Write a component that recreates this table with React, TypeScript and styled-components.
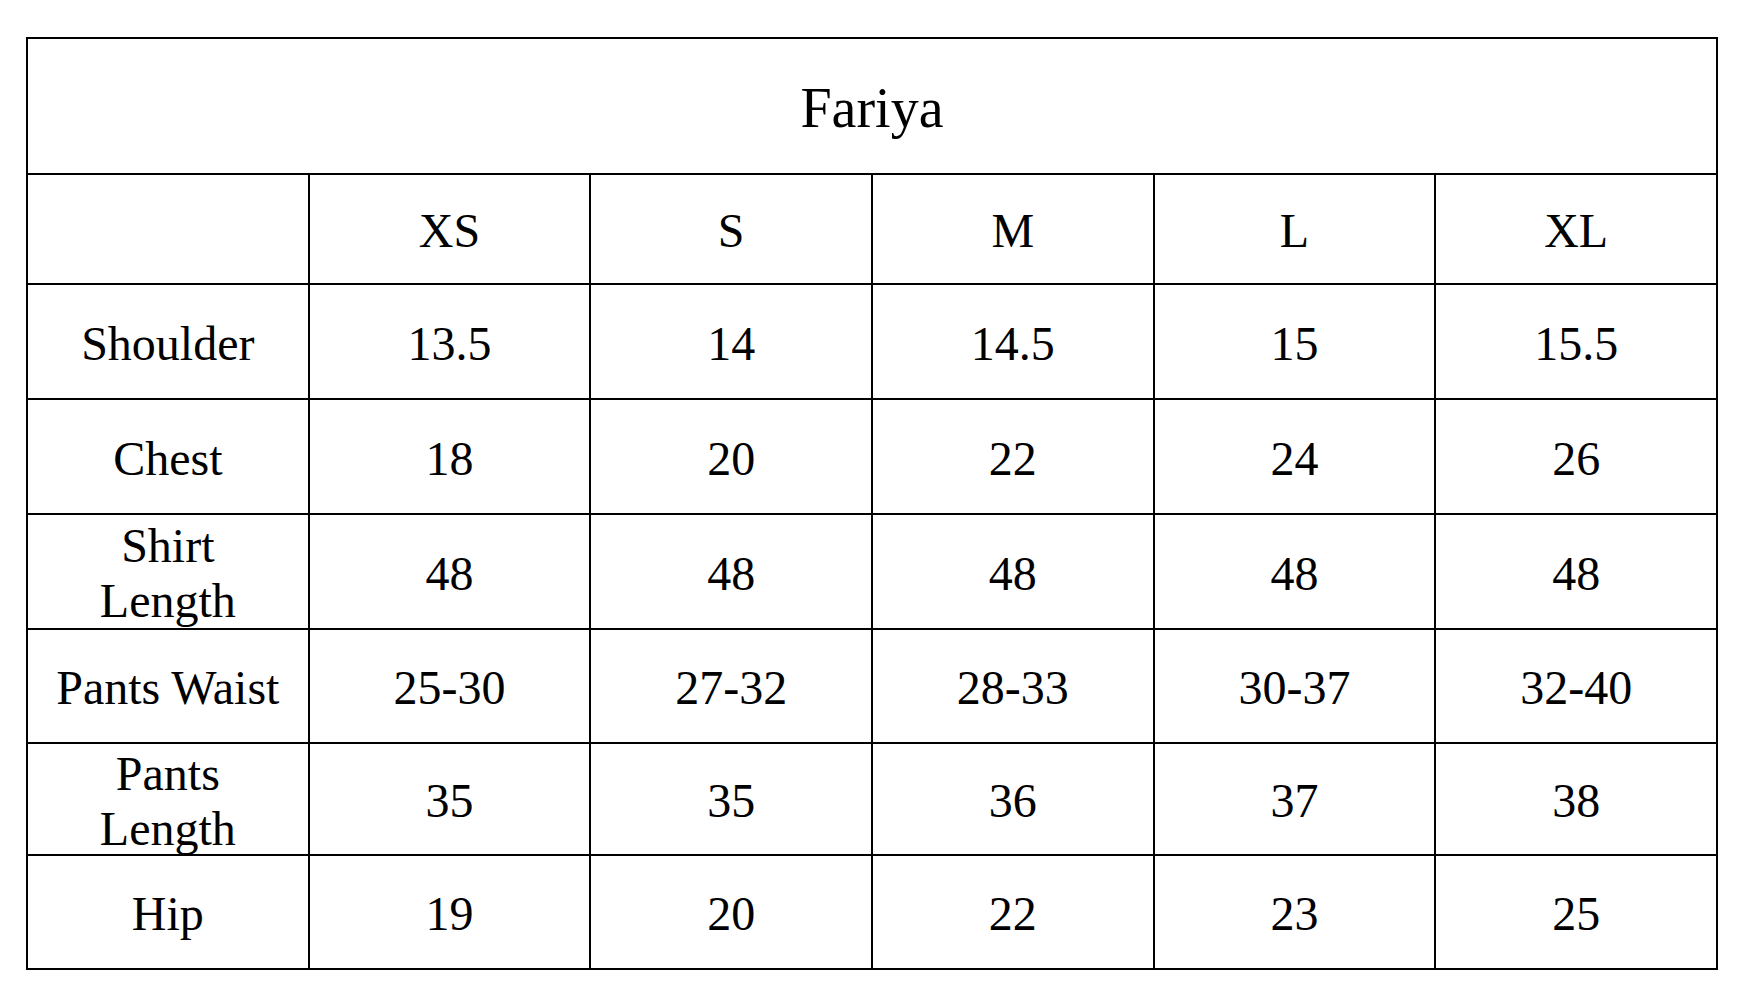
import React from 'react';
import styled, { createGlobalStyle } from 'styled-components';

const GlobalStyle = createGlobalStyle`
  html, body {
    margin: 0;
    padding: 0;
    background: #ffffff;
  }
  * {
    box-sizing: border-box;
  }
`;

const Page = styled.div`
  width: 1747px;
  height: 999px;
  padding: 37px 0 0 26px;
  background: #ffffff;
  font-family: "Liberation Serif", "Times New Roman", serif;
  color: #000000;
`;

const Grid = styled.div`
  width: 1692px;
  display: grid;
  grid-template-columns: repeat(6, 1fr);
  grid-template-rows: 136px 110px 115px 115px 115px 114px 112px 114px;
  border-top: 2px solid #000;
  border-left: 2px solid #000;
`;

type CellProps = {
  $span?: number;
  $title?: boolean;
};

const Cell = styled.div<CellProps>`
  grid-column: ${({ $span }) => ($span ? `span ${$span}` : 'auto')};
  display: flex;
  align-items: center;
  justify-content: center;
  text-align: center;
  border-right: 2px solid #000;
  border-bottom: 2px solid #000;
  font-size: ${({ $title }) => ($title ? '56px' : '48px')};
  line-height: ${({ $title }) => ($title ? '1.15' : '55px')};
  padding-top: ${({ $title }) => ($title ? '5px' : '3px')};
`;

const sizes = ['XS', 'S', 'M', 'L', 'XL'];

const rows: { label: React.ReactNode; values: string[] }[] = [
  { label: 'Shoulder', values: ['13.5', '14', '14.5', '15', '15.5'] },
  { label: 'Chest', values: ['18', '20', '22', '24', '26'] },
  { label: <>Shirt<br />Length</>, values: ['48', '48', '48', '48', '48'] },
  { label: 'Pants Waist', values: ['25-30', '27-32', '28-33', '30-37', '32-40'] },
  { label: <>Pants<br />Length</>, values: ['35', '35', '36', '37', '38'] },
  { label: 'Hip', values: ['19', '20', '22', '23', '25'] },
];

export default function App() {
  return (
    <>
      <GlobalStyle />
      <Page>
        <Grid>
          <Cell $span={6} $title>Fariya</Cell>

          <Cell />
          {sizes.map(size => (
            <Cell key={size}>{size}</Cell>
          ))}

          {rows.map((row, i) => (
            <React.Fragment key={i}>
              <Cell>{row.label}</Cell>
              {row.values.map((v, j) => (
                <Cell key={j}>{v}</Cell>
              ))}
            </React.Fragment>
          ))}
        </Grid>
      </Page>
    </>
  );
}
